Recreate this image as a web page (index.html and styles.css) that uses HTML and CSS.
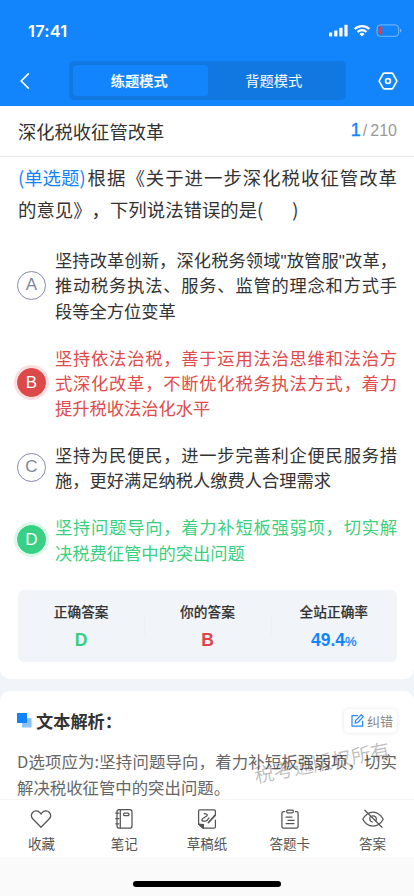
FILE: index.html
```html
<!DOCTYPE html>
<html lang="zh-CN">
<head>
<meta charset="utf-8">
<meta name="viewport" content="width=device-width, initial-scale=1">
<title>练题模式</title>
<link rel="stylesheet" href="styles.css">
</head>
<body>
<div class="app">
  <header class="header">
    <div class="status">
      <span class="time">17:41</span>
      <svg class="status-icons" width="76" height="16" viewBox="0 0 76 16">
        <g fill="#fff">
          <rect x="1" y="9.5" width="3.2" height="4" rx=".8"/>
          <rect x="6.2" y="7.5" width="3.2" height="6" rx=".8"/>
          <rect x="11.3" y="4.7" width="3.2" height="8.8" rx=".8"/>
          <rect x="16.4" y="1.8" width="3.2" height="11.7" rx=".8"/>
          <path d="M34 13.6l-2.5-2.6a3.6 3.6 0 0 1 5 0z"/>
        </g>
        <g fill="none" stroke="#fff" stroke-width="2.2">
          <path d="M26.7 6a10.5 10.5 0 0 1 14.6 0"/>
          <path d="M29.5 9a6.5 6.5 0 0 1 9 0"/>
        </g>
        <rect x="49" y="1.9" width="21.6" height="11.4" rx="3.2" fill="none" stroke="#fff" stroke-opacity=".42"/>
        <path d="M72.2 5.8c1.7.7 1.7 3.1 0 3.8z" fill="#fff" fill-opacity=".5"/>
        <rect x="50.6" y="3.6" width="2.8" height="8" rx="1" fill="#fa3527"/>
      </svg>
    </div>
    <nav class="nav">
      <svg class="back" width="12" height="18" viewBox="0 0 12 18"><path d="M9.8 1.4L2.200 9l7.600 7.600" fill="none" stroke="#fff" stroke-width="1.6"/></svg>
      <div class="tabs"><div class="tab active">练题模式</div><div class="tab">背题模式</div></div>
      <svg class="gear" width="20" height="18" viewBox="0 0 20 18"><g fill="none" stroke="#fff" stroke-width="1.7"><path d="M6.1 1.2h7.8q.6 0 .9.5l3.8 6.7q.3.6 0 1.2l-3.8 6.7q-.3.5-.9.5H6.1q-.6 0-.9-.5L1.4 9.6q-.3-.6 0-1.2l3.8-6.7q.3-.5.9-.5z"/><circle cx="10" cy="9" r="2.4"/></g></svg>
    </nav>
  </header>

  <main class="content">
    <section class="card question-card">
      <div class="chapter"><h1>深化税收征管改革</h1><span class="count"><b>1</b><i>/</i>210</span></div>
      <div class="question">
        <div class="first"><span class="type">(单选题)</span><span class="fill">根据《关于进一步深化税收征管改革</span></div>
        <div>的意见》，下列说法错误的是(<span class="blank"></span>)</div>
      </div>
      <ul class="options">
        <li class="option"><span class="mark">A</span><div class="text"><p class="full">坚持改革创新，深化税务领域<span class="quote">"</span>放管服<span class="quote">"</span>改革，</p><p class="full">推动税务执法、服务、监管的理念和方式手</p><p>段等全方位变革</p></div></li>
        <li class="option wrong"><span class="mark">B</span><div class="text"><p class="full">坚持依法治税，善于运用法治思维和法治方</p><p class="full">式深化改革，不断优化税务执法方式，着力</p><p>提升税收法治化水平</p></div></li>
        <li class="option"><span class="mark">C</span><div class="text"><p class="full">坚持为民便民，进一步完善利企便民服务措</p><p>施，更好满足纳税人缴费人合理需求</p></div></li>
        <li class="option right"><span class="mark">D</span><div class="text"><p class="full">坚持问题导向，着力补短板强弱项，切实解</p><p>决税费征管中的突出问题</p></div></li>
      </ul>
      <div class="result">
        <div class="cell"><span>正确答案</span><strong class="green">D</strong></div>
        <div class="cell"><span>你的答案</span><strong class="red">B</strong></div>
        <div class="cell"><span>全站正确率</span><strong class="blue">49.4<small>%</small></strong></div>
      </div>
    </section>

    <section class="card analysis">
      <div class="analysis-head">
        <svg width="15" height="15" viewBox="0 0 15 15"><rect x="5" y="5" width="9.5" height="9.5" fill="#8ac1ff"/><rect width="10" height="10" fill="#1283fb"/></svg>
        <h2>文本解析：</h2>
        <div class="report"><svg width="13" height="13" viewBox="0 0 13 13"><g fill="none" stroke="#2687f7" stroke-width="1.2"><path d="M7 1.7H1v10.4h10.6V6.8"/><path d="M4.2 9.1l.4-2.5 5.7-5.8 2 1.9-5.8 5.9z"/></g></svg>纠错</div>
      </div>
      <div class="explain">
        <p class="full">D选项应为:坚持问题导向，着力补短板强弱项，切实</p>
        <p>解决税收征管中的突出问题。</p>
        <span class="watermark">税考通版权所有</span>
      </div>
    </section>
  </main>

  <footer class="toolbar">
    <div class="tool"><svg width="22" height="22" viewBox="0 0 22 22"><path d="M11 19.3L2.9 11C1.2 9.2 1 6.5 2.6 4.5c2-2.4 5.5-2 7.3.2L11 6.2l1.1-1.5c1.8-2.2 5.3-2.6 7.3-.2 1.6 2 1.4 4.7-.3 6.5z"/></svg><span>收藏</span></div>
    <div class="tool"><svg width="22" height="22" viewBox="0 0 22 22"><rect x="4" y="1.6" width="15" height="18.5" rx="2.2"/><path d="M7.3 1.6v18.500M2.800 5.200h3M2.800 10.700h3M2.800 15.800h3"/><rect x="10.6" y="5" width="5.3" height="2.6" rx=".9"/></svg><span>笔记</span></div>
    <div class="tool"><svg width="22" height="22" viewBox="0 0 22 22"><path d="M19.400 7.500V3q0-1.200-1.200-1.200H3.800Q2.600 1.800 2.600 3v13l4.600 4.200h11q1.200 0 1.200-1.200v-7"/><path d="M2.600 16l4.900.7-.3 3.500z" fill="#555"/><path d="M8.300 5.700c2 .2 3.200.7 3 1.600-.3 1.400-5.600 3-5.500 4.800.1 1.500 3.300 1.300 4.700.6 1.200-.6 1.400-2 2.500-2.700"/><path d="M12.500 14.500l6.300-6.800" stroke-width="1.800"/></svg><span>草稿纸</span></div>
    <div class="tool"><svg width="22" height="22" viewBox="0 0 22 22"><path d="M5.7 3.6H4.500q-1.600 0-1.600 1.500v13.400q0 1.600 1.600 1.600h13q1.600 0 1.600-1.600V5.100q0-1.500-1.600-1.500h-1.200"/><rect x="7.8" y="2" width="6.4" height="2.9" rx=".8"/><path d="M7 9h6M9 12.300h6M7 15.600h8"/></svg><span>答题卡</span></div>
    <div class="tool"><svg width="22" height="22" viewBox="0 0 22 22"><path d="M.8 11.200C3.300 6.600 6.800 4 11 4s7.700 2.600 10.200 7.200C18.700 15.800 15.200 18 11 18S3.300 15.800.8 11.200z"/><path d="M8 9.200q-1 3.800 2.300 4.800M10.200 7.900c3-.5 4.800 1.900 4 4.500M2.800 2.200l17.200 17"/></svg><span>答案</span></div>
  </footer>
  <div class="home"><i></i></div>
</div>
</body>
</html>
```
FILE: styles.css
```css
* { box-sizing: border-box; }
body, h1, h2, p, ul { margin: 0; padding: 0; }
body {
  font-family: "Liberation Sans", "Noto Sans CJK SC", sans-serif;
  color: #333;
  background: #f1f5f9;
  text-spacing-trim: space-all;
}
svg { display: block; flex: none; }
.app { width: 414px; height: 896px; display: flex; flex-direction: column; overflow: hidden; }

.header { height: 106px; flex: none; background: #1385fc; color: #fff; }
.status { height: 61px; display: flex; justify-content: space-between; padding: 23px 11px 0 28px; }
.time { font: 600 16.4px/16px Inter, sans-serif; letter-spacing: .2px; }
.status-icons { width: 76px; margin-right: -1px; }
.nav { display: flex; align-items: center; height: 39px; padding: 0 16px 0 19px; }
.tabs { display: flex; width: 277px; height: 39px; padding: 4px; margin-left: 38px; margin-right: auto; border-radius: 5px; background: #1078e0; }
.tab { flex: 1; display: flex; align-items: center; justify-content: center; padding: 0 2px 1px 0; font-size: 14.2px; border-radius: 4px; }
.tab.active { background: #1385fc; font-weight: 500; -webkit-text-stroke: .2px #fff; }

.content { flex: 1; min-height: 0; overflow: hidden; }
.card { background: #fff; }
.question-card { height: 573px; border-radius: 0 0 10px 10px; }
.chapter { height: 51px; display: flex; align-items: center; justify-content: space-between; padding: 0 17px 1px 18px; border-bottom: 1px solid #e9e9e9; }
.chapter h1 { font-size: 18.3px; font-weight: 400; }
.count { color: #999; font-size: 16px; }
.count b { color: #1385fc; font-size: 18px; margin-right: 2px; font-weight: 400; -webkit-text-stroke: .4px #1385fc; }
.count i { font-style: normal; margin-right: 3px; }

.question { padding: 4px 17px 0 18px; font: 18.4px/32px "Noto Sans CJK SC", sans-serif; }
.question div { height: 32px; white-space: nowrap; }
.question .first { display: flex; gap: 2px; }
.type { color: #1385fc; }
.fill { flex: 1; text-align: justify; text-align-last: justify; }
.blank { display: inline-block; width: 29px; }

.options { list-style: none; padding: 22px 17px 0; display: flex; flex-direction: column; gap: 21.3px; }
.option { display: flex; align-items: center; gap: 9px; }
.mark { width: 29px; height: 29px; flex: none; border: 1px solid #858ba5; border-radius: 50%; display: flex; align-items: center; justify-content: center; color: #7f869e; font-size: 17px; }
.text { flex: 1; min-width: 0; font: 17.25px/25.4px "Noto Sans CJK SC", sans-serif; white-space: nowrap; }
.full { text-align: justify; text-align-last: justify; }
.quote { font-family: "Liberation Sans", sans-serif; line-height: 1; }
.wrong { color: #e04a4a; }
.wrong .mark { background: #dd4848; border-color: #dd4848; color: #fff; box-shadow: 0 0 0 3px #fbdfe0; }
.right { color: #37d17f; }
.right .mark { background: #37d084; border-color: #37d084; color: #fff; box-shadow: 0 0 0 3px #dcf8e8; }

.result { display: flex; height: 72px; margin: 25px 17px 0 18px; background: #f1f5f9; border-radius: 6px; }
.cell { flex: 1; display: flex; flex-direction: column; align-items: center; padding-top: 13px; font-size: 13.7px; line-height: 20px; font-weight: 700; }
.cell + .cell { background: linear-gradient(#edf1f5, #edf1f5) 0 26px / 1px 20px no-repeat; }
.cell span { font-weight: 500; -webkit-text-stroke: .15px #333; }
.cell strong { font-size: 17.5px; line-height: 20px; margin-top: 7px; }
.cell small { font-size: 13px; font-weight: 400; -webkit-text-stroke: .3px #1385fc; }
.green { color: #35d07f; }
.red { color: #e04347; }
.blue { color: #1385fc; }

.analysis { margin-top: 12px; height: 120px; border-radius: 10px 10px 0 0; padding: 17px 17px 0; }
.analysis-head { display: flex; align-items: center; height: 25px; }
.analysis-head h2 { font-size: 17.2px; font-weight: 700; margin-left: 4px; }
.report { display: flex; align-items: center; gap: 3px; margin-left: auto; width: 53px; height: 24px; padding-left: 7px; border-radius: 5px; color: #888; font-size: 13px; box-shadow: 0 0 4px rgba(0,0,0,.1); }
.explain { position: relative; margin-top: 16px; color: #666; font: 16.4px/25.5px "Noto Sans CJK SC", sans-serif; white-space: nowrap; }
.watermark { position: absolute; left: 236px; top: 0; font-size: 19.7px; line-height: 26px; color: rgba(0,0,0,.26); transform: rotate(-11deg); }

.toolbar { height: 58px; flex: none; display: flex; background: #fff; border-top: 1px solid #f5f5f5; }
.tool { flex: 1; display: flex; flex-direction: column; align-items: center; padding-top: 8px; color: #555; font-size: 13.5px; line-height: 20px; }
.tool span { margin-top: 5px; }
.tool svg { fill: none; stroke: #555; stroke-width: 1.25; stroke-linejoin: round; stroke-linecap: round; }
.home { height: 39px; flex: none; background: #fafafa; display: flex; justify-content: center; padding-top: 24px; }
.home i { width: 148px; height: 6px; border-radius: 3px; background: #000; }
```
